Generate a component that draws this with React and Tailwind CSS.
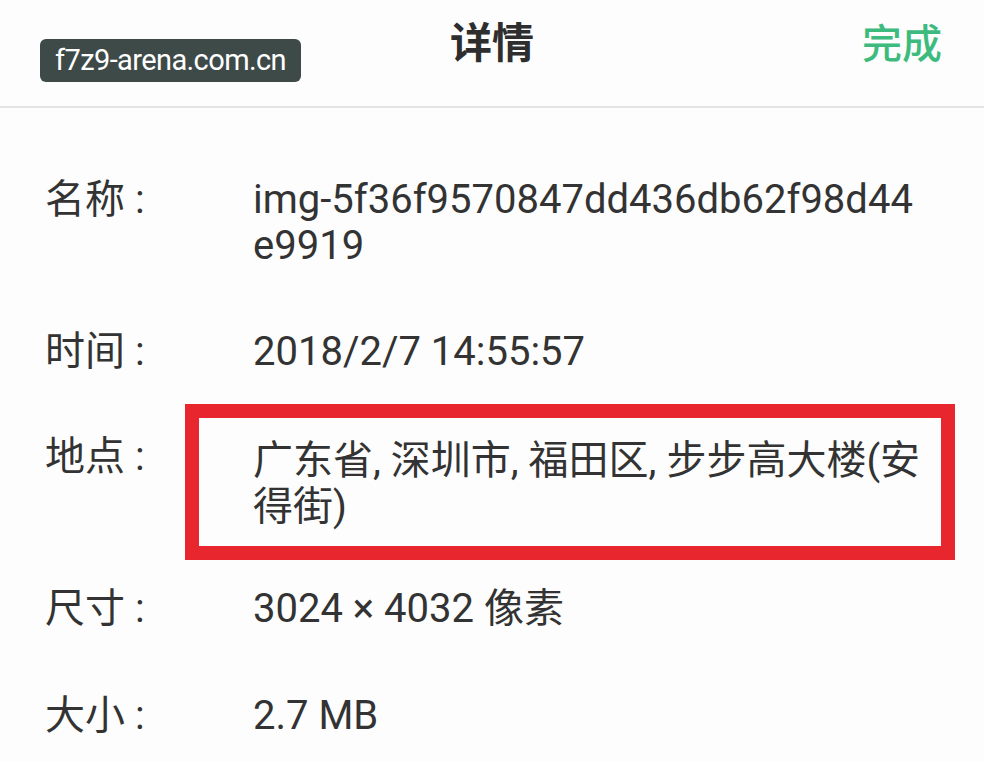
import React from 'react';

const rows = [
  { label: '名称', value: ['img-5f36f9570847dd436db62f98d44', 'e9919'], gap: 'mt-[69px]' },
  { label: '时间', value: ['2018/2/7 14:55:57'], gap: 'mt-[60px]' },
];

const tail = [
  { label: '尺寸', value: ['3024 × 4032 像素'], gap: 'mt-[26px]' },
  { label: '大小', value: ['2.7 MB'], gap: 'mt-[61px]' },
];

const Row = ({ label, value, gap }) => (
  <div className={`flex items-start px-[45px] ${gap}`}>
    <div className="w-[140px] shrink-0">{label} :</div>
    <div className="flex-1 pl-[68px] whitespace-nowrap">
      {value.map(line => <div key={line}>{line}</div>)}
    </div>
  </div>
);

const App = () => {
  return (
    <div
      className="w-[984px] h-[762px] overflow-hidden bg-[#fdfdfd] text-[#333333] text-[40px] leading-[46px]"
      style={{ fontFamily: 'Roboto, "Noto Sans CJK SC", sans-serif' }}
    >
      {/* header */}
      <div className="relative flex items-center justify-center h-[108px] border-b-2 border-[#e4e4e6]">
        <div className="absolute left-[40px] top-[39px] h-[43px] w-[261px] rounded-md bg-[#3e4a48] flex items-center justify-center">
          <span className="text-white text-[29px] leading-none tracking-[-0.6px]">
            f7z9-arena.com.cn
          </span>
        </div>
        <h1 className="text-[42px] font-bold text-[#2e2e2e] -mt-[18px]">详情</h1>
        <button className="absolute right-[42px] top-[22px] text-[40px] font-medium text-[#3dbb7e]">完成</button>
      </div>

      {/* details */}
      {rows.map(r => <Row key={r.label} {...r} />)}

      <div className="flex items-start px-[45px] mt-[29px]">
        <div className="w-[140px] shrink-0 mt-[30px]">地点 :</div>
        <div className="flex-1 border-[14px] border-[#e8262e] pl-[54px] pr-[10px] pt-[20px] pb-[16px] mr-[-16px]">
          广东省, 深圳市, 福田区, 步步高大楼(安得街)
        </div>
      </div>

      {tail.map(r => <Row key={r.label} {...r} />)}
    </div>
  );
};

export default App;
